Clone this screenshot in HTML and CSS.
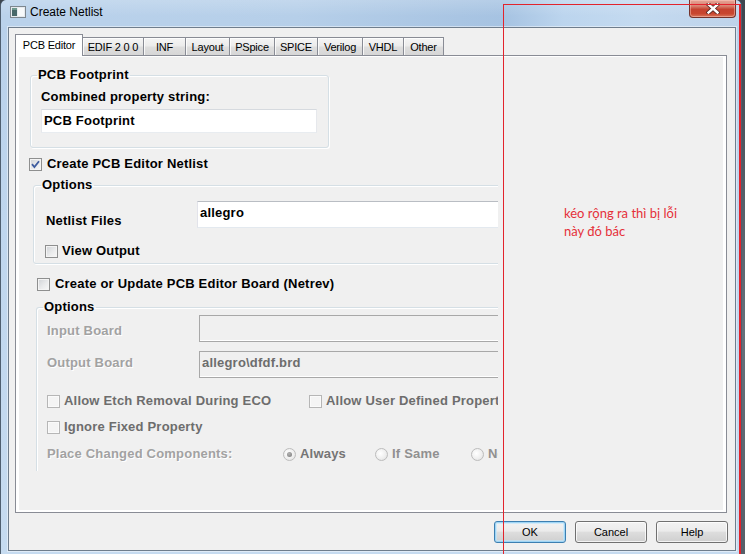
FILE: index.html
```html
<!DOCTYPE html>
<html>
<head>
<meta charset="utf-8">
<title>Create Netlist</title>
<link rel="stylesheet" href="styles.css">
</head>
<body>
<div class="desk">
  <div class="window">
    <div class="titlebar">
      <svg class="appicon" width="16" height="12" viewBox="0 0 16 12">
        <rect x="0.5" y="0.5" width="15" height="11" fill="#e6eaee" stroke="#7e878f"/>
        <rect x="2" y="2" width="5" height="8" fill="#48686a"/>
        <rect x="8" y="2" width="6" height="8" fill="#f7f9fa"/>
        <rect x="2" y="2" width="5" height="2" fill="#6f9a8f"/>
      </svg>
      <span class="title">Create Netlist</span>
      <div class="close">
        <svg width="14" height="11" viewBox="0 0 14 11">
          <path d="M2.5 1.5 L11.5 9.5 M11.5 1.5 L2.5 9.5" stroke="#5a2a24" stroke-width="4.2" stroke-linecap="square"/>
          <path d="M2.5 1.5 L11.5 9.5 M11.5 1.5 L2.5 9.5" stroke="#ffffff" stroke-width="2.4" stroke-linecap="square"/>
        </svg>
      </div>
    </div>
    <div class="client">
      <div class="tabs">
        <div class="tab sel t-pcb">PCB Editor</div>
        <div class="tab t-edif">EDIF 2 0 0</div>
        <div class="tab t-inf">INF</div>
        <div class="tab t-layout">Layout</div>
        <div class="tab t-pspice">PSpice</div>
        <div class="tab t-spice">SPICE</div>
        <div class="tab t-verilog">Verilog</div>
        <div class="tab t-vhdl">VHDL</div>
        <div class="tab t-other">Other</div>
      </div>
      <div class="panel">
        <div class="child">
          <div class="page">
            <fieldset class="grp grp-fp">
              <legend>PCB Footprint</legend>
              <div class="lbl-comb">Combined property string:</div>
              <div class="edit edit-fp">PCB Footprint</div>
            </fieldset>

            <div class="chk chk-netlist">
              <span class="box">
                <svg width="11" height="11" viewBox="0 0 11 11"><path d="M2 5.2 L4.4 8 L9 2.2" fill="none" stroke="#3e5c9f" stroke-width="1.8"/></svg>
              </span>
              <span>Create PCB Editor Netlist</span>
            </div>

            <fieldset class="grp grp-opt1">
              <legend>Options</legend>
              <div class="frow">
                <span class="flabel fl1">Netlist Files</span>
                <div class="edit edit-wide">allegro</div>
              </div>
              <div class="chk chk-view"><span class="box"></span><span>View Output</span></div>
            </fieldset>

            <div class="chk chk-board"><span class="box"></span><span>Create or Update PCB Editor Board (Netrev)</span></div>

            <fieldset class="grp grp-opt2">
              <legend>Options</legend>
              <div class="frow">
                <span class="flabel fl2 fl-in dis">Input Board</span>
                <div class="edit edit-wide off"></div>
              </div>
              <div class="frow frow-out">
                <span class="flabel fl2 fl-out dis">Output Board</span>
                <div class="edit edit-wide off">allegro\dfdf.brd</div>
              </div>
              <div class="crow crow-first">
                <div class="chk dim c-etch"><span class="box boxdis"></span><span>Allow Etch Removal During ECO</span></div>
                <div class="chk dim"><span class="box boxdis"></span><span>Allow User Defined Properties</span></div>
              </div>
              <div class="crow">
                <div class="chk dim"><span class="box boxdis"></span><span>Ignore Fixed Property</span></div>
              </div>
              <div class="crow crow-place">
                <span class="dis place">Place Changed Components:</span>
                <div class="radio r-always"><span class="rb on"></span><span>Always</span></div>
                <div class="radio r-same light"><span class="rb"></span><span>If Same</span></div>
                <div class="radio light"><span class="rb"></span><span>Never</span></div>
              </div>
            </fieldset>
          </div>
        </div>
      </div>
      <div class="buttons">
        <div class="btn def">OK</div>
        <div class="btn">Cancel</div>
        <div class="btn">Help</div>
      </div>
    </div>
  </div>
  <div class="annot">
    <div class="note">kéo rộng ra thì bị lỗi<br>này đó bác</div>
  </div>
</div>
</body>
</html>
```
FILE: styles.css
```css
* { box-sizing: border-box; }
html, body { margin: 0; padding: 0; }
body {
  width: 745px;
  height: 554px;
  overflow: hidden;
  background: #4f5862;
  font-family: "Liberation Sans", Arial, sans-serif;
}
.desk {
  position: relative;
  width: 745px;
  height: 554px;
  background: linear-gradient(180deg, #3e464f 0%, #66707a 60%, #575f68 100%);
}
.window {
  width: 742px;
  height: 554px;
  display: flex;
  flex-direction: column;
  border-left: 1px solid #4f5f70;
  border-right: 1px solid #4f5f70;
  border-radius: 6px 6px 0 0;
  background: linear-gradient(180deg, #b8d0ea 0%, #bfd6ee 40%, #c6dbf0 100%);
}
.titlebar {
  height: 27px;
  flex: none;
  display: flex;
  align-items: flex-start;
  padding-left: 9px;
  border-radius: 6px 6px 0 0;
  background:
    linear-gradient(180deg, rgba(255,255,255,0.18), rgba(255,255,255,0) 60%),
    linear-gradient(90deg, #bad2eb 0%, #b6cfe9 40%, #a9c5e3 62%, #a6c3e2 68%, #bcd5ee 76%, #c4daf0 86%, #bed3ea 100%);
}
.appicon { margin-top: 6px; flex: none; }
.title {
  margin-left: 4px;
  margin-top: 5px;
  font-size: 12px;
  line-height: 14px;
  color: #000;
}
.close {
  margin-left: auto;
  margin-right: 5px;
  width: 47px;
  height: 18px;
  border: 1px solid #74322a;
  border-top: none;
  border-radius: 0 0 4px 4px;
  display: flex;
  align-items: center;
  justify-content: center;
  background: linear-gradient(180deg, #e7a597 0%, #d88372 35%, #c5422f 55%, #c8462f 80%, #d9765c 100%);
  box-shadow: inset 0 0 0 1px rgba(255,210,200,0.45);
}
.client {
  flex: 1;
  margin: 0 5px 3px 7px;
  border: 1px solid #6f7d8c;
  background: #f0f0f0;
  padding: 6px 7px 7px 6px;
  display: flex;
  flex-direction: column;
  box-shadow: 0 0 0 1px rgba(255,255,255,0.45);
}
.tabs {
  display: flex;
  align-items: flex-end;
  flex: none;
}
.tab {
  height: 18px;
  border: 1px solid #898c95;
  border-left: none;
  border-bottom: none;
  background: linear-gradient(180deg, #f5f5f5 0%, #ececec 45%, #dedede 55%, #d6d6d6 100%);
  box-shadow: inset 1px 1px 0 rgba(255,255,255,0.8);
  font-size: 11px;
  letter-spacing: -0.2px;
  color: #000;
  display: flex;
  align-items: center;
  justify-content: center;
  white-space: nowrap;
}
.tab.sel {
  height: 22px;
  margin-bottom: -1px;
  border-left: 1px solid #898c95;
  background: #ffffff;
  box-shadow: none;
  position: relative;
  z-index: 1;
  padding-bottom: 2px;
}
.t-pcb { width: 68px; }
.t-edif { width: 61px; }
.t-inf { width: 42px; }
.t-layout { width: 44px; }
.t-pspice { width: 45px; }
.t-spice { width: 43px; }
.t-verilog { width: 45px; }
.t-vhdl { width: 41px; }
.t-other { width: 40px; }

.panel {
  height: 458px;
  flex: none;
  margin-right: 1px;
  border: 1px solid #898c95;
  background: #ffffff;
  padding: 1px 3px 2px 3px;
}
.child {
  height: 100%;
  background: #f0f0f0;
  overflow: hidden;
}
.page {
  width: 479px;
  height: 100%;
  overflow: hidden;
  font-weight: bold;
  font-size: 13px;
  line-height: 14px;
  letter-spacing: 0.2px;
  color: #000;
  display: flex;
  flex-direction: column;
  align-items: flex-start;
}
.grp {
  margin: 0;
  min-width: 0;
  border: 1px solid #d5dfe5;
  border-radius: 3px;
  box-shadow: inset 1px 1px 0 #ffffff, 1px 1px 0 #ffffff;
}
.grp legend {
  padding: 0 1px;
  font-size: 13px;
  line-height: 14px;
  font-weight: bold;
}
.grp-fp {
  margin-top: 11px;
  margin-left: 11px;
  width: 299px;
  padding: 8px 6px 14px 6px;
}
.lbl-comb { margin-left: 4px; white-space: nowrap; }
.edit {
  background: #ffffff;
  border: 1px solid;
  border-color: #b9bdc3 #e2e3ea #e3e9ef #e2e3ea;
  padding: 4px 2px;
  white-space: nowrap;
  overflow: hidden;
}
.edit-fp {
  margin-top: 5px;
  margin-left: 4px;
  width: 276px;
  height: 24px;
  border-color: #d6dadf #e6e8ec #e8ecf0 #e6e8ec;
}
.edit-wide {
  width: 330px;
  height: 27px;
  flex: none;
}
.edit.off {
  background: #f0f0f0;
  border-color: #a8a8a8;
  box-shadow: inset 0 -1px 0 #ffffff;
  color: #6d6d6d;
}
.chk {
  display: flex;
  align-items: center;
  gap: 4px;
  height: 14px;
  white-space: nowrap;
  flex: none;
}
.box {
  width: 13px;
  height: 13px;
  flex: none;
  border: 1px solid #8e8f8f;
  background: linear-gradient(135deg, #cfd2d6 0%, #eaebec 55%, #f8f8f8 100%);
  box-shadow: inset 0 0 0 1px #f4f4f4;
  display: flex;
  align-items: center;
  justify-content: center;
}
.box svg { display: block; }
.box.boxdis {
  border-color: #b6b6b6;
  background: #f4f4f4;
  box-shadow: inset 0 0 0 1px #fafafa;
}
.chk-netlist {
  margin-top: 9px;
  margin-left: 10px;
  gap: 5px;
}
.grp-opt1 {
  margin-top: 7px;
  margin-left: 14px;
  width: 520px;
  padding: 9px 0 5px 7px;
}
.frow {
  display: flex;
  align-items: flex-start;
}
.flabel { flex: none; white-space: nowrap; }
.fl1 { margin-left: 5px; width: 151px; margin-top: 13px; }
.fl2 { margin-left: 4px; width: 152px; }
.fl-in { margin-top: 9px; }
.fl-out { margin-top: 5px; }
.chk-view { margin-top: 16px; margin-left: 4px; }
.chk-board {
  margin-top: 13px;
  margin-left: 18px;
  gap: 5px;
}
.grp-opt2 {
  margin-top: 9px;
  margin-left: 17px;
  width: 520px;
  padding: 1px 0 10px 6px;
  border-bottom: none;
  border-radius: 3px 3px 0 0;
  box-shadow: inset 1px 1px 0 #ffffff;
}
.frow-out { margin-top: 9px; }
.crow {
  display: flex;
  align-items: center;
  height: 14px;
  margin-top: 12px;
  margin-left: 4px;
  white-space: nowrap;
}
.crow-first { margin-top: 16px; }
.crow-place { margin-top: 13px; }
.c-etch { width: 262px; }
.dis {
  color: #a2a2a2;
  text-shadow: 1px 1px 0 #ffffff;
}
.dim { color: #6d6d6d; }
.place { width: 236px; flex: none; }
.radio {
  display: flex;
  align-items: center;
  gap: 4px;
  color: #757575;
  flex: none;
}
.radio.light { color: #909090; }
.r-always { width: 92px; }
.r-same { width: 96px; }
.rb {
  width: 13px;
  height: 13px;
  flex: none;
  border-radius: 50%;
  border: 1px solid #bcbcbc;
  background: radial-gradient(circle at 40% 40%, #ffffff 0%, #efefef 55%, #dcdcdc 100%);
  display: flex;
  align-items: center;
  justify-content: center;
}
.rb.on::after {
  content: "";
  width: 5px;
  height: 5px;
  border-radius: 50%;
  background: radial-gradient(circle at 40% 35%, #b4b4b4, #777777);
}
.buttons {
  display: flex;
  justify-content: flex-end;
  gap: 9px;
  margin-top: 8px;
  flex: none;
}
.btn {
  width: 72px;
  height: 22px;
  border: 1px solid #707070;
  border-radius: 3px;
  background: linear-gradient(180deg, #f2f2f2 0%, #ebebeb 45%, #dddddd 52%, #cfcfcf 100%);
  box-shadow: inset 0 0 0 1px rgba(255,255,255,0.75);
  font-size: 11px;
  line-height: 20px;
  text-align: center;
  color: #000;
}
.btn.def {
  border-color: #3c7fb1;
  box-shadow: inset 0 0 0 1px #9fd5f5, inset 0 0 0 2px rgba(190,230,253,0.6);
}
.annot {
  position: absolute;
  left: 503px;
  top: 4px;
  width: 238px;
  height: 560px;
  border: 1px solid #e2232c;
  border-right-width: 2px;
  padding: 199px 0 0 60px;
}
.note {
  font-family: Lato, "Open Sans", sans-serif;
  font-size: 13px;
  line-height: 18px;
  color: #e5303a;
}
```
